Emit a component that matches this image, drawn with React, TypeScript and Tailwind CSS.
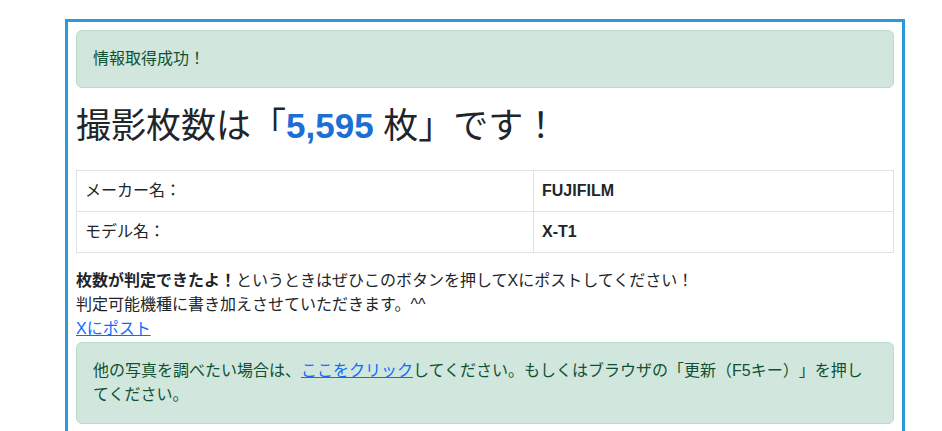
export default function App() {
  return (
    <div
      className="min-h-screen bg-white pt-[19px] text-[16px] leading-6 text-[#212529] [text-spacing-trim:space-all]"
      style={{ fontFamily: '"Liberation Sans", "Noto Sans CJK JP", sans-serif' }}
    >
      <div className="ml-[65px] w-[840px] border-x-[3px] border-t-[3px] border-[#2a9bd7] px-2 pt-2 pb-4">
        <div className="mb-4 rounded-md border border-[#badbcc] bg-[#d1e7dd] p-4 text-[#0f5132]">
          情報取得成功！
        </div>

        <h1 className="mb-[22px] text-[35px] leading-[44px] font-normal">
          撮影枚数は「
          <span className="font-bold text-[#1b6fd5]">5,595</span> 枚」です！
        </h1>

        <table className="mb-4 w-full border-collapse">
          <tbody>
            <tr>
              <td className="w-[457px] border border-[#dee2e6] p-2">メーカー名：</td>
              <td className="border border-[#dee2e6] p-2 font-bold">FUJIFILM</td>
            </tr>
            <tr>
              <td className="border border-[#dee2e6] p-2">モデル名：</td>
              <td className="border border-[#dee2e6] p-2 font-bold">X-T1</td>
            </tr>
          </tbody>
        </table>

        <p>
          <b>枚数が判定できたよ！</b>
          というときはぜひこのボタンを押してXにポストしてください！
          <br />
          判定可能機種に書き加えさせていただきます。^^
          <br />
          <a href="#" className="text-[#0d6efd] underline">
            Xにポスト
          </a>
        </p>

        <div className="mt-px rounded-md border border-[#badbcc] bg-[#d1e7dd] p-4 text-[#0f5132]">
          他の写真を調べたい場合は、
          <a href="#" className="text-[#0d6efd] underline">
            ここをクリック
          </a>
          してください。もしくはブラウザの「更新（F5キー）」を押し
          <br />
          てください。
        </div>
      </div>
    </div>
  );
}
